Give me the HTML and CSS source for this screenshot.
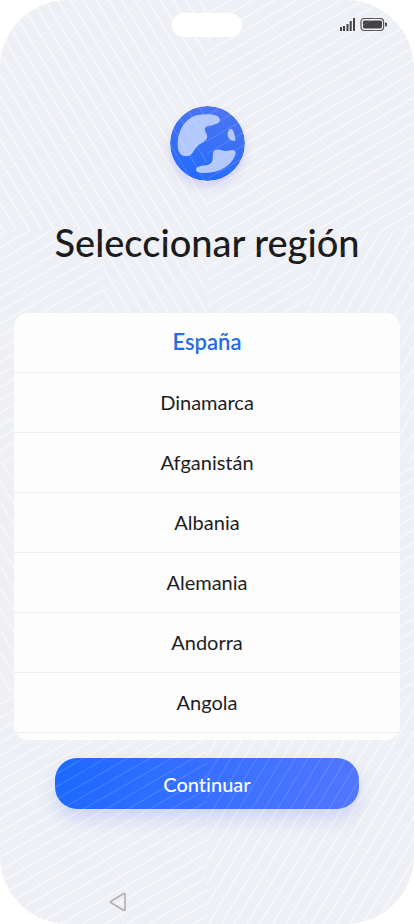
FILE: index.html
```html
<!DOCTYPE html>
<html lang="es">
<head>
  <meta charset="utf-8">
  <meta name="viewport" content="width=device-width, initial-scale=1">
  <title>Seleccionar región</title>
  <link rel="stylesheet" href="styles.css">
</head>
<body>
  <div class="screen">
    <svg class="weave" aria-hidden="true">
      <defs>
        <pattern id="falling" width="11" height="11" patternUnits="userSpaceOnUse" patternTransform="rotate(-31)">
          <path d="M5.500 0V11"/>
        </pattern>
        <pattern id="shallow" width="11" height="11" patternUnits="userSpaceOnUse" patternTransform="rotate(-30)">
          <path d="M0 5.500H11"/>
        </pattern>
        <pattern id="rising" width="11" height="11" patternUnits="userSpaceOnUse" patternTransform="rotate(31)">
          <path d="M5.500 0V11"/>
        </pattern>
      </defs>
      <g id="tiles">
        <rect x="0" y="0" width="50%" height="25%" fill="url(#falling)"/>
        <rect x="50%" y="0" width="50%" height="25%" fill="url(#shallow)"/>
        <rect x="0" y="25%" width="25%" height="25%" fill="url(#shallow)"/>
        <rect x="25%" y="25%" width="25%" height="25%" fill="url(#falling)"/>
        <rect x="50%" y="25%" width="25%" height="25%" fill="url(#shallow)"/>
        <rect x="75%" y="25%" width="25%" height="25%" fill="url(#rising)"/>
        <rect x="0" y="50%" width="25%" height="25%" fill="url(#falling)"/>
        <rect x="25%" y="50%" width="25%" height="25%" fill="url(#shallow)"/>
        <rect x="50%" y="50%" width="25%" height="25%" fill="url(#rising)"/>
        <rect x="75%" y="50%" width="25%" height="25%" fill="url(#shallow)"/>
        <rect x="0" y="75%" width="50%" height="25%" fill="url(#shallow)"/>
        <rect x="50%" y="75%" width="50%" height="25%" fill="url(#rising)"/>
      </g>
    </svg>

    <header class="status">
      <span class="camera"></span>
      <svg class="status-icons" viewBox="0 0 48 14" aria-hidden="true">
        <g fill="#444">
          <rect x="0" y="9" width="2" height="4"/>
          <rect x="3" y="8" width="2" height="5"/>
          <rect x="6.500" y="6" width="2" height="7"/>
          <rect x="9.700" y="3" width="2" height="10"/>
          <rect x="13" y="0" width="2" height="13"/>
          <rect x="23" y="2.500" width="19" height="8" rx="1.500"/>
          <rect x="45" y="4.500" width="2" height="4" rx="1"/>
        </g>
        <rect x="21" y="0.500" width="22.600" height="12" rx="3.500" fill="none" stroke="#555" stroke-width="1.200"/>
      </svg>
    </header>

    <main class="content">
      <svg class="globe" viewBox="29 33 224 224" aria-hidden="true">
        <defs>
          <linearGradient id="ocean" x1="0.7" y1="0" x2="0.4" y2="1">
            <stop offset="0" stop-color="#4f76f0"/>
            <stop offset="1" stop-color="#246bff"/>
          </linearGradient>
        </defs>
        <circle cx="141" cy="145" r="112" fill="url(#ocean)"/>
        <g fill="#b3c9fd">
          <path d="M52 150C52 105 75 68 112 60C140 54 178 58 178 73C178 88 155 88 142 93C128 98 134 108 139 118C144 130 132 140 120 146C106 154 102 168 92 178C80 187 52 186 52 150Z"/>
          <path d="M211 101C218 100 224 122 224 137C215 139 201 131 201 118C201 108 206 102 211 101Z"/>
          <path d="M158 172C160 162 172 161 184 165C196 170 204 165 214 165C226 165 228 172 222 184C212 208 180 236 125 233C108 233 102 224 110 217C120 208 135 213 148 206C160 199 155 184 158 172Z"/>
        </g>
      </svg>
      <h1 class="title">Seleccionar región</h1>
      <ul class="regions">
        <li><button class="region selected" type="button" aria-pressed="true">España</button></li>
        <li><button class="region" type="button">Dinamarca</button></li>
        <li><button class="region" type="button">Afganistán</button></li>
        <li><button class="region" type="button">Albania</button></li>
        <li><button class="region" type="button">Alemania</button></li>
        <li><button class="region" type="button">Andorra</button></li>
        <li><button class="region" type="button">Angola</button></li>
      </ul>
      <button class="continue" type="button">Continuar</button>
    </main>

    <nav class="navbar">
      <button class="back" type="button" aria-label="Atrás">
        <svg viewBox="0 0 18 20" aria-hidden="true">
          <path d="M2 9.200L14.500 1.800Q16 1 16 2.600V17.400Q16 19 14.500 18.200L2 10.800Q1 10 2 9.200Z" fill="none" stroke="#b2b2b5" stroke-width="1.700" stroke-linejoin="round"/>
        </svg>
      </button>
    </nav>

    <svg class="weave sheen" aria-hidden="true">
      <use href="#tiles"/>
    </svg>
  </div>
</body>
</html>
```
FILE: styles.css
```css
* {
  box-sizing: border-box;
}

body {
  margin: 0;
  background: #fff;
  color: #1b1b1d;
  font-family: Lato, "Noto Sans", sans-serif;
  font-variant-ligatures: none;
}

button {
  border: 0;
  background: none;
  font: inherit;
  font-variant-ligatures: none;
  color: inherit;
  cursor: pointer;
}

.screen {
  position: relative;
  display: flex;
  flex-direction: column;
  min-height: 100vh;
  overflow: hidden;
  isolation: isolate;
  border-radius: 68px;
  background: #eff0f5;
}

.status {
  display: grid;
  grid-template-columns: 1fr auto 1fr;
  align-items: center;
  padding: 13px 26px 0;
}

.camera {
  grid-column: 2;
  width: 70px;
  height: 24px;
  border-radius: 12px;
  background: #fff;
}

.status-icons {
  justify-self: end;
  width: 48px;
  height: 14px;
}

.content {
  display: flex;
  flex: 1;
  flex-direction: column;
  align-items: center;
  padding: 69px 14px 0;
}

.globe {
  width: 75px;
  height: 75px;
  border-radius: 50%;
  box-shadow: 0 6px 10px rgba(110, 110, 240, 0.22);
}

.title {
  margin: 37px 0 46px;
  font-size: 38px;
  font-weight: 500;
  line-height: 49px;
  text-align: center;
}

.regions {
  align-self: stretch;
  margin: 0;
  padding: 0 0 7px;
  overflow: hidden;
  border-radius: 14px;
  background: #fdfdfd;
  list-style: none;
}

.regions li {
  border-bottom: 1px solid #eeeef0;
}

.region {
  display: block;
  width: 100%;
  height: 59px;
  padding: 0 0 2px;
  font-size: 20px;
}

.selected {
  color: #256ae5;
  font-size: 22px;
  font-weight: 600;
}

.continue {
  align-self: stretch;
  height: 51px;
  margin: 18px 41px 0;
  border-radius: 22px;
  background: linear-gradient(100deg, #1d69ff, #5277ff);
  box-shadow: 0 10px 18px rgba(80, 125, 255, 0.22);
  color: #fff;
  font-size: 20px;
  font-weight: 500;
}

.navbar {
  display: flex;
  padding: 0 109px 12px;
}

.back {
  display: flex;
  padding: 0;
}

.back svg {
  width: 18px;
  height: 20px;
}

.weave {
  position: absolute;
  inset: 0;
  z-index: -1;
  width: 100%;
  height: 100%;
  pointer-events: none;
}

.weave path {
  fill: none;
  stroke: rgba(255, 255, 255, 0.7);
  stroke-width: 1;
}

.sheen {
  z-index: 1;
  opacity: 0.2;
}
```
